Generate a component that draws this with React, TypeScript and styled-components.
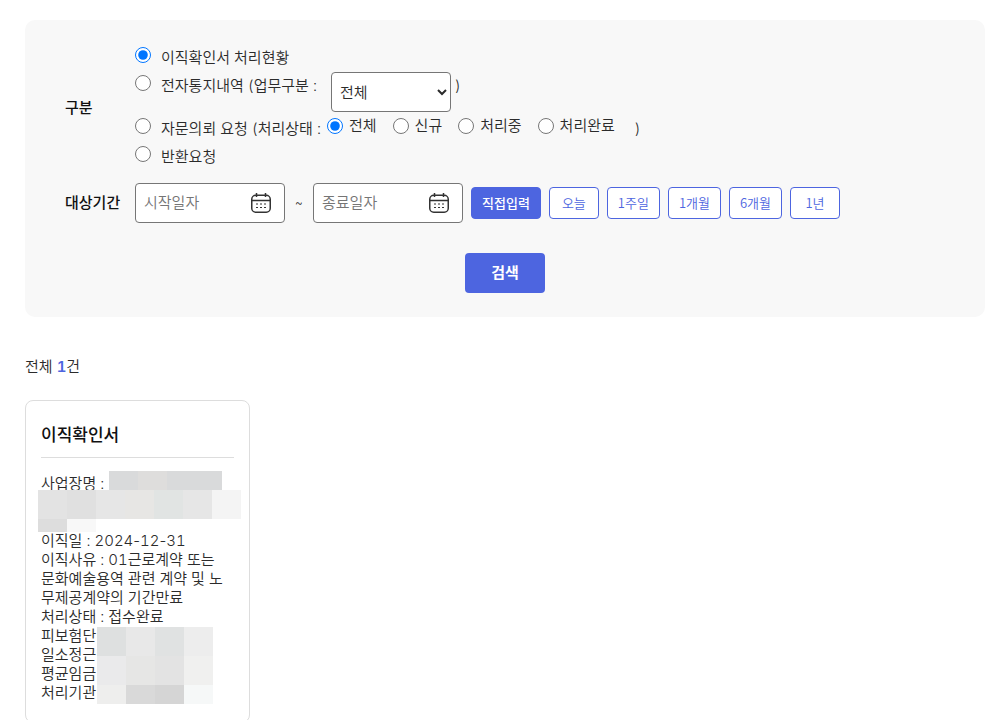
import React, { useState } from "react";
import styled, { createGlobalStyle } from "styled-components";

const accent = "#4d65e0";

const GlobalStyle = createGlobalStyle`
  *, *::before, *::after { box-sizing: border-box; }
  body {
    margin: 0;
    background: #fff;
    color: #2b2b2b;
    font-family: Inter, "Noto Sans CJK KR", sans-serif;
    font-size: 15px;
    font-weight: 350;
    font-variant-numeric: tabular-nums;
    line-height: 20px;
  }
  button, input, select { font: inherit; color: inherit; }
`;

const Page = styled.main`
  padding: 20px 17px 0 25px;
`;

const SearchPanel = styled.form`
  padding: 24px 40px;
  border-radius: 10px;
  background: #f8f8f8;
`;

const FieldRow = styled.div`
  display: grid;
  grid-template-columns: 70px 1fr;
  align-items: center;
  & + & { margin-top: 12px; }
`;

const FieldLabel = styled.span`
  color: #111;
  font-weight: 500;
`;

const Options = styled.div`
  display: flex;
  flex-direction: column;
`;

const OptionRow = styled.div<{ $tall?: boolean }>`
  display: flex;
  align-items: flex-start;
  min-height: ${(p) => (p.$tall ? 43 : 28)}px;
`;

const Option = styled.label`
  display: flex;
  align-items: flex-start;
  gap: 10px;
  line-height: 28px;
  white-space: nowrap;
`;

const Radio = styled.input.attrs({ type: "radio" })`
  flex: none;
  width: 16px;
  height: 16px;
  margin: 3px 0 0;
`;

const StatusGroup = styled.div`
  display: flex;
  gap: 16px;
  margin-left: 6px;
`;

const StatusOption = styled(Option)`
  gap: 6px;
  line-height: 22px;
`;

const Closing = styled.span<{ $gap: number }>`
  margin-left: ${(p) => p.$gap}px;
  line-height: 28px;
`;

const KindSelect = styled.select`
  width: 120px;
  height: 40px;
  margin: 0 0 0 14px;
  padding: 0 0 0 4px;
  border: 1px solid #767676;
  border-radius: 4px;
  background: #fff;
`;

const Period = styled.div`
  display: flex;
  flex-wrap: wrap;
  align-items: center;
  gap: 8px;
`;

const DateBox = styled.div`
  display: flex;
  align-items: center;
  width: 150px;
  height: 40px;
  padding: 0 12px 0 8px;
  border: 1px solid #767676;
  border-radius: 4px;
  background: #fff;
`;

const DateInput = styled.input`
  flex: 1;
  min-width: 0;
  padding: 0;
  border: 0;
  outline: 0;
  background: transparent;
  &::placeholder { color: #757575; opacity: 1; }
`;

const IconButton = styled.button`
  display: flex;
  padding: 0;
  border: 0;
  background: none;
  color: #333;
`;

const Tilde = styled.span`
  width: 12px;
  text-align: center;
  font-size: 12px;
`;

const RangeButton = styled.button<{ $active: boolean }>`
  min-width: 50px;
  height: 32px;
  padding: 0 10px;
  border: 1px solid ${accent};
  border-radius: 4px;
  background: ${(p) => (p.$active ? accent : "#fff")};
  color: ${(p) => (p.$active ? "#fff" : accent)};
  font-family: "Noto Sans CJK KR", sans-serif;
  font-size: 13px;
  font-weight: ${(p) => (p.$active ? 500 : 350)};
`;

const SearchButton = styled.button`
  display: block;
  width: 80px;
  height: 40px;
  margin: 30px auto 0;
  border: 0;
  border-radius: 4px;
  background: ${accent};
  color: #fff;
  font-weight: 700;
`;

const Total = styled.p`
  margin: 40px 0 23px;
  strong {
    color: ${accent};
    font-weight: 600;
  }
`;

const Card = styled.article`
  width: 225px;
  padding: 20px 15px;
  border: 1px solid #ddd;
  border-radius: 8px;
`;

const CardTitle = styled.h2`
  margin: 0 0 16px;
  padding-bottom: 7px;
  border-bottom: 1px solid #ddd;
  color: #111;
  font-size: 17px;
  font-weight: 500;
  line-height: 29px;
`;

const Details = styled.div`
  position: relative;
  padding-right: 4px;
  line-height: 19px;
  word-break: break-all;
`;

const Detail = styled.p<{ $lines?: number }>`
  min-height: ${(p) => (p.$lines ?? 1) * 19}px;
  margin: 0;
`;

const Hyphen = styled.span`
  font-variant-numeric: normal;
`;

const Mask = styled.div<{ $top: number; $left: number }>`
  position: absolute;
  top: ${(p) => p.$top}px;
  left: ${(p) => p.$left}px;
`;

const MaskRow = styled.div<{ $height: number; $indent?: number; $width?: number }>`
  display: flex;
  width: ${(p) => (p.$width ? `${p.$width}px` : "auto")};
  height: ${(p) => p.$height}px;
  margin-left: ${(p) => p.$indent ?? 0}px;
  overflow: hidden;
`;

const MaskCell = styled.span<{ $color: string }>`
  flex: none;
  width: 29px;
  background: ${(p) => p.$color};
`;

type MaskLine = { height: number; indent?: number; width?: number; colors: string[] };

const nameMask: MaskLine[] = [
  { height: 19, indent: 71, width: 113, colors: ["#d9dadb", "#dedddc", "#d9dadb", "#d9dadb"] },
  { height: 29, colors: ["#e3e3e3", "#e0e0e0", "#e6e6e6", "#e7e6e4", "#e1e4e3", "#e6e6e6", "#f4f4f4"] },
  { height: 13, colors: ["#dddddd", "#f8f8f8"] },
];

const valueMask: MaskLine[] = [
  { height: 29, colors: ["#dee0e0", "#e8e8e8", "#e0e2e2", "#ededed"] },
  { height: 29, colors: ["#eaeaeb", "#e6e6e5", "#e3e3e3", "#f0f0ef"] },
  { height: 19, colors: ["#eeeeed", "#d9d9d9", "#d5d5d5", "#f6f8f8"] },
];

function Mosaic({ lines, top, left }: { lines: MaskLine[]; top: number; left: number }) {
  return (
    <Mask $top={top} $left={left} aria-hidden="true">
      {lines.map((line, i) => (
        <MaskRow key={i} $height={line.height} $indent={line.indent} $width={line.width}>
          {line.colors.map((color, j) => (
            <MaskCell key={j} $color={color} />
          ))}
        </MaskRow>
      ))}
    </Mask>
  );
}

function CalendarIcon() {
  return (
    <svg width="22" height="22" viewBox="0 0 22 22" fill="none" aria-hidden="true">
      <rect x="1.75" y="3.25" width="18.5" height="17" rx="4" stroke="currentColor" strokeWidth="1.5" />
      <path d="M2 8.5h18M6.5 1v4M15.5 1v4" stroke="currentColor" strokeWidth="1.5" />
      <path
        d="M6 12h2M10 12h2M14 12h2M6 15.5h2M10 15.5h2M14 15.5h2"
        stroke="currentColor"
        strokeWidth="1.2"
      />
    </svg>
  );
}

function DateField({ label }: { label: string }) {
  return (
    <DateBox>
      <DateInput type="text" placeholder={label} aria-label={label} />
      <IconButton type="button" aria-label={label}>
        <CalendarIcon />
      </IconButton>
    </DateBox>
  );
}

const statuses = ["전체", "신규", "처리중", "처리완료"];
const ranges = ["직접입력", "오늘", "1주일", "1개월", "6개월", "1년"];

export default function App() {
  const [range, setRange] = useState(ranges[0]);

  return (
    <>
      <GlobalStyle />
      <Page>
        <SearchPanel onSubmit={(e) => e.preventDefault()}>
          <FieldRow role="radiogroup" aria-labelledby="kind-label">
            <FieldLabel id="kind-label">구분</FieldLabel>
            <Options>
              <OptionRow>
                <Option>
                  <Radio name="kind" defaultChecked />
                  이직확인서 처리현황
                </Option>
              </OptionRow>
              <OptionRow $tall>
                <Option>
                  <Radio name="kind" />
                  전자통지내역 (업무구분 :
                </Option>
                <KindSelect aria-label="업무구분">
                  <option>전체</option>
                </KindSelect>
                <Closing $gap={4}>)</Closing>
              </OptionRow>
              <OptionRow>
                <Option>
                  <Radio name="kind" />
                  자문의뢰 요청 (처리상태 :
                </Option>
                <StatusGroup role="radiogroup" aria-label="처리상태">
                  {statuses.map((status, i) => (
                    <StatusOption key={status}>
                      <Radio name="status" defaultChecked={i === 0} />
                      {status}
                    </StatusOption>
                  ))}
                </StatusGroup>
                <Closing $gap={20}>)</Closing>
              </OptionRow>
              <OptionRow>
                <Option>
                  <Radio name="kind" />
                  반환요청
                </Option>
              </OptionRow>
            </Options>
          </FieldRow>
          <FieldRow role="group" aria-labelledby="period-label">
            <FieldLabel id="period-label">대상기간</FieldLabel>
            <Period>
              <DateField label="시작일자" />
              <Tilde>~</Tilde>
              <DateField label="종료일자" />
              {ranges.map((item) => (
                <RangeButton key={item} type="button" $active={item === range} onClick={() => setRange(item)}>
                  {item}
                </RangeButton>
              ))}
            </Period>
          </FieldRow>
          <SearchButton type="submit">검색</SearchButton>
        </SearchPanel>

        <Total>
          전체 <strong>1</strong>건
        </Total>

        <Card>
          <CardTitle>이직확인서</CardTitle>
          <Details>
            <Detail $lines={3}>사업장명 :</Detail>
            <Detail>
              이직일 : 2024<Hyphen>-</Hyphen>12<Hyphen>-</Hyphen>31
            </Detail>
            <Detail>이직사유 : 01근로계약 또는 문화예술용역 관련 계약 및 노무제공계약의 기간만료</Detail>
            <Detail>처리상태 : 접수완료</Detail>
            <Detail>피보험단</Detail>
            <Detail>일소정근</Detail>
            <Detail>평균임금</Detail>
            <Detail>처리기관</Detail>
            <Mosaic lines={nameMask} top={-3} left={-3} />
            <Mosaic lines={valueMask} top={153} left={56} />
          </Details>
        </Card>
      </Page>
    </>
  );
}
